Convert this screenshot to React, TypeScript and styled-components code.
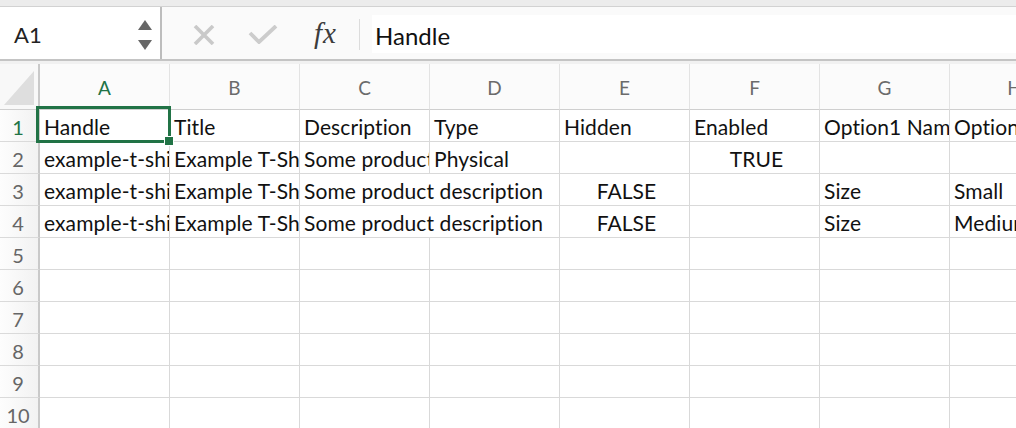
import styled, { createGlobalStyle } from 'styled-components';

const GlobalStyle = createGlobalStyle`
  html, body {
    margin: 0;
    padding: 0;
    background: #ffffff;
    overflow: hidden;
  }
  body {
    font-family: Lato, "Open Sans", sans-serif;
  }
`;

const GREEN = '#217346';

interface CellData {
  text?: string;
  center?: boolean;
  span?: number;
}

const columns = ['A', 'B', 'C', 'D', 'E', 'F', 'G', 'H'];

const rows: CellData[][] = [
  [
    { text: 'Handle' },
    { text: 'Title' },
    { text: 'Description' },
    { text: 'Type' },
    { text: 'Hidden' },
    { text: 'Enabled' },
    { text: 'Option1 Name' },
    { text: 'Option1 Value' },
  ],
  [
    { text: 'example-t-shirt' },
    { text: 'Example T-Shirt' },
    { text: 'Some product description' },
    { text: 'Physical' },
    {},
    { text: 'TRUE', center: true },
    {},
    {},
  ],
  [
    { text: 'example-t-shirt' },
    { text: 'Example T-Shirt' },
    { text: 'Some product description', span: 2 },
    { text: 'FALSE', center: true },
    {},
    { text: 'Size' },
    { text: 'Small' },
  ],
  [
    { text: 'example-t-shirt' },
    { text: 'Example T-Shirt' },
    { text: 'Some product description', span: 2 },
    { text: 'FALSE', center: true },
    {},
    { text: 'Size' },
    { text: 'Medium' },
  ],
];

const TOTAL_ROWS = 10;

const Window = styled.div`
  width: 1016px;
  height: 428px;
  overflow: hidden;
`;

const TopStrip = styled.div`
  height: 6px;
  background: #ececec;
  border-bottom: 1px solid #d2d2d2;
`;

const FormulaBar = styled.div`
  height: 52px;
  display: flex;
  align-items: stretch;
  background: #fafafa;
  border-bottom: 2px solid #c4c4c4;
`;

const BarGap = styled.div`
  height: 3px;
  background: #f1f1f1;
`;

const NameBox = styled.div`
  width: 162px;
  display: flex;
  align-items: center;
  justify-content: space-between;
  padding: 3px 8px 0 14px;
  box-sizing: border-box;
  background: #ffffff;
  border-right: 2px solid #bdbdbd;
  font-size: 22px;
  color: #222222;
`;

const Stepper = styled.div`
  display: flex;
  flex-direction: column;
  gap: 10px;
  padding-top: 1px;
`;

const Tools = styled.div`
  display: flex;
  align-items: center;
  padding: 3px 0 0 31px;
`;

const ToolIcon = styled.div<{ $w: number }>`
  width: ${(p) => p.$w}px;
  display: flex;
  justify-content: center;
  align-items: center;
`;

const Fx = styled.div`
  font-family: "Liberation Serif", serif;
  font-style: italic;
  font-size: 29px;
  color: #3c3c3c;
  width: 42px;
  padding-left: 3px;
  padding-bottom: 2px;
  letter-spacing: 1px;
`;

const Divider = styled.div`
  width: 1px;
  height: 31px;
  background: #dcdcdc;
  margin-left: 3px;
`;

const FormulaInput = styled.div`
  flex: 1;
  margin: 8px 0 6px 12px;
  background: #ffffff;
  display: flex;
  align-items: center;
  font-size: 24px;
  color: #111111;
  padding: 3px 0 0 3px;
`;

const Grid = styled.div`
  display: grid;
  grid-template-columns: 40px repeat(8, 130px);
  grid-template-rows: 46px repeat(${TOTAL_ROWS}, 32px);
  width: 1080px;
`;

const Corner = styled.div`
  position: relative;
  box-sizing: border-box;
  background: #f8f8f8;
  border-right: 2px solid #c9c9c9;
  border-bottom: 1px solid #cfcfcf;
`;

const CornerTriangle = styled.div`
  position: absolute;
  right: 4px;
  bottom: 4px;
  width: 30px;
  height: 34px;
  background: #dedede;
  clip-path: polygon(100% 0, 100% 100%, 0 100%);
`;

const ColHeader = styled.div<{ $active?: boolean }>`
  box-sizing: border-box;
  display: flex;
  align-items: center;
  justify-content: center;
  background: #fbfbfb;
  border-right: 1px solid #e3e3e3;
  border-bottom: 1px solid #cfcfcf;
  font-size: 19px;
  color: ${(p) => (p.$active ? GREEN : '#6b6b6b')};
  padding-top: 2px;
`;

const RowHeader = styled.div<{ $active?: boolean }>`
  box-sizing: border-box;
  display: flex;
  align-items: center;
  justify-content: center;
  background: linear-gradient(to right, #fdfdfd, #f2f2f2);
  border-right: 2px solid #c9c9c9;
  border-bottom: 1px solid #dadada;
  font-size: 20px;
  color: ${(p) => (p.$active ? GREEN : '#666666')};
  padding: 2px 2px 0 0;
`;

const Cell = styled.div<{ $center?: boolean; $span?: number }>`
  position: relative;
  box-sizing: border-box;
  grid-column: span ${(p) => p.$span ?? 1};
  display: flex;
  align-items: center;
  justify-content: ${(p) => (p.$center ? 'center' : 'flex-start')};
  padding: 2px 0 0 4px;
  border-right: 1px solid #d9d9d9;
  border-bottom: 1px solid #d9d9d9;
  overflow: hidden;
  white-space: nowrap;
  font-size: 21px;
  letter-spacing: 0.1px;
  color: #111111;
`;

const Selection = styled.div`
  position: absolute;
  top: -4px;
  left: -4px;
  right: -2px;
  bottom: -2px;
  border: 3px solid ${GREEN};
  pointer-events: none;
`;

const FillHandle = styled.div`
  position: absolute;
  right: -6px;
  bottom: -6px;
  width: 8px;
  height: 8px;
  background: ${GREEN};
  border: 1px solid #ffffff;
`;

const SelectedCell = styled(Cell)`
  overflow: visible;
  z-index: 2;
`;

const Clip = styled.span`
  display: block;
  overflow: hidden;
  max-width: 100%;
`;

const ArrowUp = () => (
  <svg width="14" height="10" viewBox="0 0 14 10">
    <polygon points="7,0 14,10 0,10" fill="#676767" />
  </svg>
);

const ArrowDown = () => (
  <svg width="14" height="10" viewBox="0 0 14 10">
    <polygon points="0,0 14,0 7,10" fill="#676767" />
  </svg>
);

const CancelIcon = () => (
  <svg width="22" height="20" viewBox="0 0 22 20">
    <path d="M2 1 L20 19 M20 1 L2 19" stroke="#c9c9c9" strokeWidth="3.6" fill="none" />
  </svg>
);

const ConfirmIcon = () => (
  <svg width="30" height="19" viewBox="0 0 30 19">
    <path d="M2 8 L11 17 L28 1" stroke="#cccccc" strokeWidth="3.8" fill="none" />
  </svg>
);

const App = () => {
  const bodyRows: CellData[][] = Array.from({ length: TOTAL_ROWS }, (_, i) =>
    rows[i] ?? columns.map(() => ({}))
  );

  return (
    <Window>
      <GlobalStyle />
      <TopStrip />
      <FormulaBar>
        <NameBox>
          <span>A1</span>
          <Stepper>
            <ArrowUp />
            <ArrowDown />
          </Stepper>
        </NameBox>
        <Tools>
          <ToolIcon $w={22}>
            <CancelIcon />
          </ToolIcon>
          <ToolIcon $w={96}>
            <ConfirmIcon />
          </ToolIcon>
          <Fx>fx</Fx>
          <Divider />
        </Tools>
        <FormulaInput>Handle</FormulaInput>
      </FormulaBar>
      <BarGap />
      <Grid>
        <Corner>
          <CornerTriangle />
        </Corner>
        {columns.map((c) => (
          <ColHeader key={c} $active={c === 'A'}>
            {c}
          </ColHeader>
        ))}
        {bodyRows.map((row, r) => [
          <RowHeader key={`h${r}`} $active={r === 0}>
            {r + 1}
          </RowHeader>,
          ...row.map((cell, c) =>
            r === 0 && c === 0 ? (
              <SelectedCell key={`${r}-${c}`}>
                <Clip>{cell.text}</Clip>
                <Selection>
                  <FillHandle />
                </Selection>
              </SelectedCell>
            ) : (
              <Cell key={`${r}-${c}`} $center={cell.center} $span={cell.span}>
                {cell.text}
              </Cell>
            )
          ),
        ])}
      </Grid>
    </Window>
  );
};

export default App;
